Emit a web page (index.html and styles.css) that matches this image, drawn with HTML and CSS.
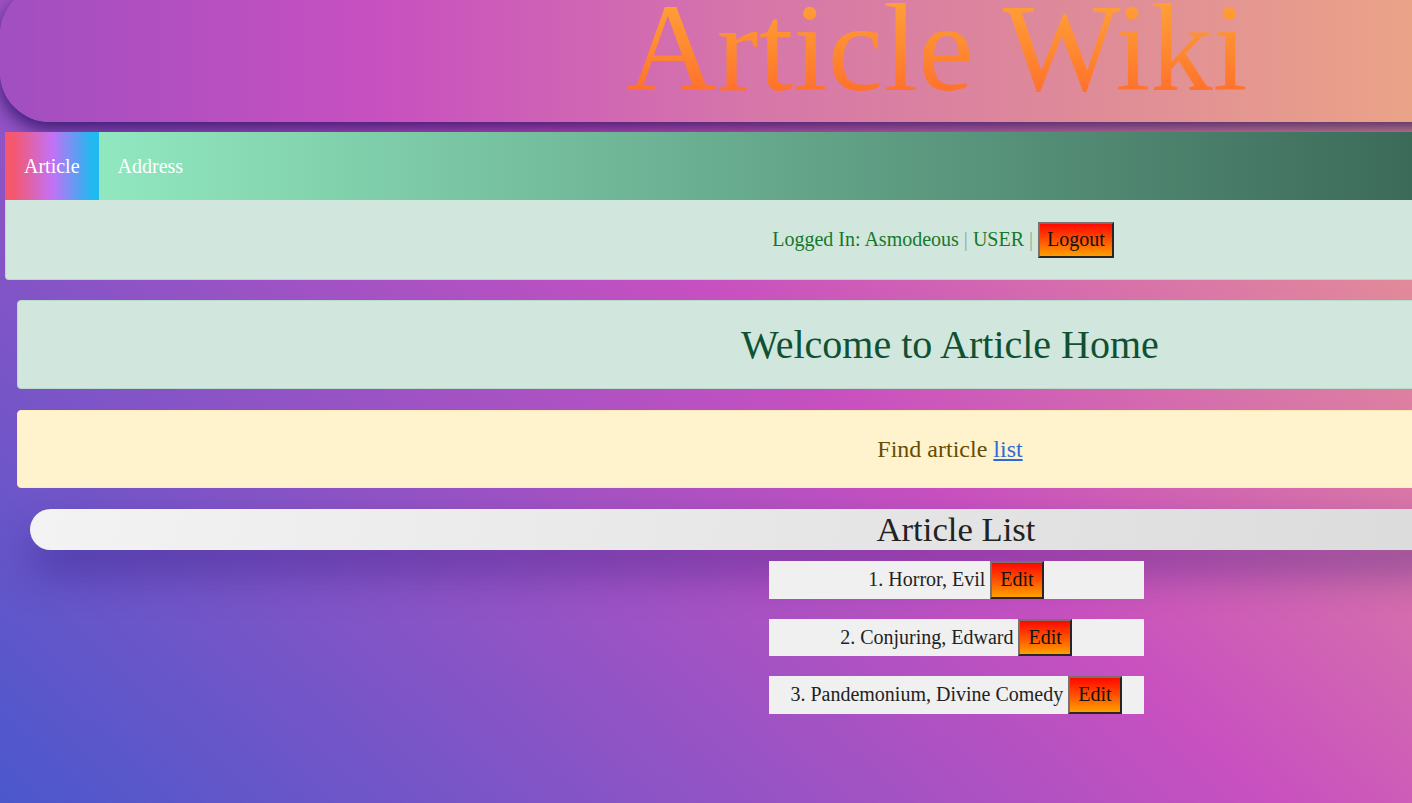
FILE: index.html
```html
<!DOCTYPE html>
<html lang="en">
<head>
<meta charset="utf-8">
<title>Article Wiki</title>
<link rel="stylesheet" href="styles.css">
</head>
<body>
<div class="page">
  <header class="site-header">
    <h1 class="site-title"><span class="title-text">Article Wiki</span></h1>
  </header>
  <nav class="nav">
    <a class="nav-link active" href="#">Article</a>
    <a class="nav-link" href="#">Address</a>
  </nav>
  <div class="login-bar">
    <span class="login-text">Logged In: Asmodeous <span class="sep">|</span> USER <span class="sep">|</span></span>
    <button class="btn-grad btn-logout" type="button">Logout</button>
  </div>
  <div class="content">
    <div class="alert alert-success">Welcome to Article Home</div>
    <div class="alert alert-warning">Find article&nbsp;<a href="#" class="link">list</a></div>
  </div>
  <section class="list-section">
    <h2 class="list-title">Article List</h2>
    <ul class="article-list">
      <li class="article-item"><span>1. Horror, Evil</span><button class="btn-grad btn-edit" type="button">Edit</button></li>
      <li class="article-item"><span>2. Conjuring, Edward</span><button class="btn-grad btn-edit" type="button">Edit</button></li>
      <li class="article-item"><span>3. Pandemonium, Divine Comedy</span><button class="btn-grad btn-edit" type="button">Edit</button></li>
    </ul>
  </section>
</div>
</body>
</html>
```
FILE: styles.css
```css
html, body {
  margin: 0;
  padding: 0;
  overflow: hidden;
}

body {
  font-family: "Liberation Serif", "Times New Roman", serif;
  font-size: 20px;
  color: #222;
}

.page {
  width: 1900px;
  min-height: 803px;
  background: linear-gradient(43deg, #4a58cc 0%, #c850c0 46%, #ffcc70 100%);
  overflow: hidden;
}

.site-header {
  width: 1874px;
  height: 137px;
  margin-top: -15px;
  box-sizing: border-box;
  padding-top: 15px;
  border-radius: 50px;
  background: linear-gradient(90deg, #a14fc1 0%, #c850c0 20.3%, #d676aa 40%, #df8c98 58.7%, #eba388 75.3%, #ffcc70 100%);
  box-shadow: 0 8px 18px rgba(30, 10, 90, 0.75);
  position: relative;
  z-index: 2;
}

.site-title {
  margin: 0;
  text-align: center;
  font-size: 125px;
  font-weight: normal;
  line-height: 96px;
}

.title-text {
  display: inline-block;
  background: linear-gradient(180deg, #ffa038 0%, #ff8a30 50%, #ff6e2c 100%);
  -webkit-background-clip: text;
  background-clip: text;
  color: transparent;
}

.nav {
  display: flex;
  margin: 10px 5px 0 5px;
  height: 68px;
  background: linear-gradient(90deg, #97f1c7 0%, #1d3c34 100%);
  position: relative;
  z-index: 3;
}

.nav-link {
  display: flex;
  align-items: center;
  padding: 0 19px;
  color: #fff;
  text-decoration: none;
  font-size: 20px;
}

.nav-link.active {
  background: linear-gradient(90deg, #f5576c 8%, #c471f5 50%, #22b8f0 92%);
}

.login-bar {
  display: flex;
  justify-content: center;
  align-items: center;
  gap: 5px;
  height: 80px;
  box-sizing: border-box;
  margin: 0 5px;
  padding-right: 14px;
  background: #d1e7dd;
  border: 1px solid #badbcc;
  border-top: none;
  border-radius: 0 0 4px 4px;
  color: #16782c;
  position: relative;
  z-index: 3;
}

.sep {
  color: #86ad95;
}

.btn-grad {
  font-family: "Liberation Serif", "Times New Roman", serif;
  font-size: 20px;
  color: #111;
  background: linear-gradient(180deg, #ff0800 0%, #ff5000 50%, #ffa000 100%);
  border-style: solid;
  border-width: 2px;
  border-color: #7a7070 #2b2424 #2b2424 #7a7070;
  cursor: pointer;
  box-sizing: border-box;
}

.btn-logout {
  height: 36px;
  padding: 0 7px;
}

.content {
  margin: 20px 17px 0 17px;
  display: flex;
  flex-direction: column;
  gap: 21px;
}

.alert {
  display: flex;
  justify-content: center;
  align-items: center;
  box-sizing: border-box;
  border-radius: 4px;
}

.alert-success {
  height: 89px;
  background: #d1e7dd;
  border: 1px solid #badbcc;
  color: #0f5132;
  font-size: 40px;
}

.alert-warning {
  height: 78px;
  background: #fff3cd;
  border: 1px solid #ffecb5;
  color: #664d03;
  font-size: 24px;
}

.link {
  color: #2f6ad9;
  text-decoration: underline;
}

.list-section {
  margin: 21px 18px 0 30px;
}

.list-title {
  margin: 0;
  height: 41px;
  line-height: 41px;
  text-align: center;
  font-size: 34.7px;
  font-weight: normal;
  color: #222;
  border-radius: 21px 0 0 21px;
  background: linear-gradient(100deg, #f3f3f3 0%, #d4d4d4 100%);
  box-shadow: 0 24px 40px rgba(40, 20, 120, 0.4);
}

.article-list {
  list-style: none;
  margin: 11px 0 0 0;
  padding: 0;
  display: flex;
  flex-direction: column;
  align-items: center;
  gap: 20px;
}

.article-item {
  width: 375px;
  height: 37.5px;
  display: flex;
  justify-content: center;
  align-items: center;
  gap: 5px;
  background: #f0f0f0;
  color: #222;
  font-size: 20px;
}

.btn-edit {
  height: 37.5px;
  padding: 0 8px;
}
```
